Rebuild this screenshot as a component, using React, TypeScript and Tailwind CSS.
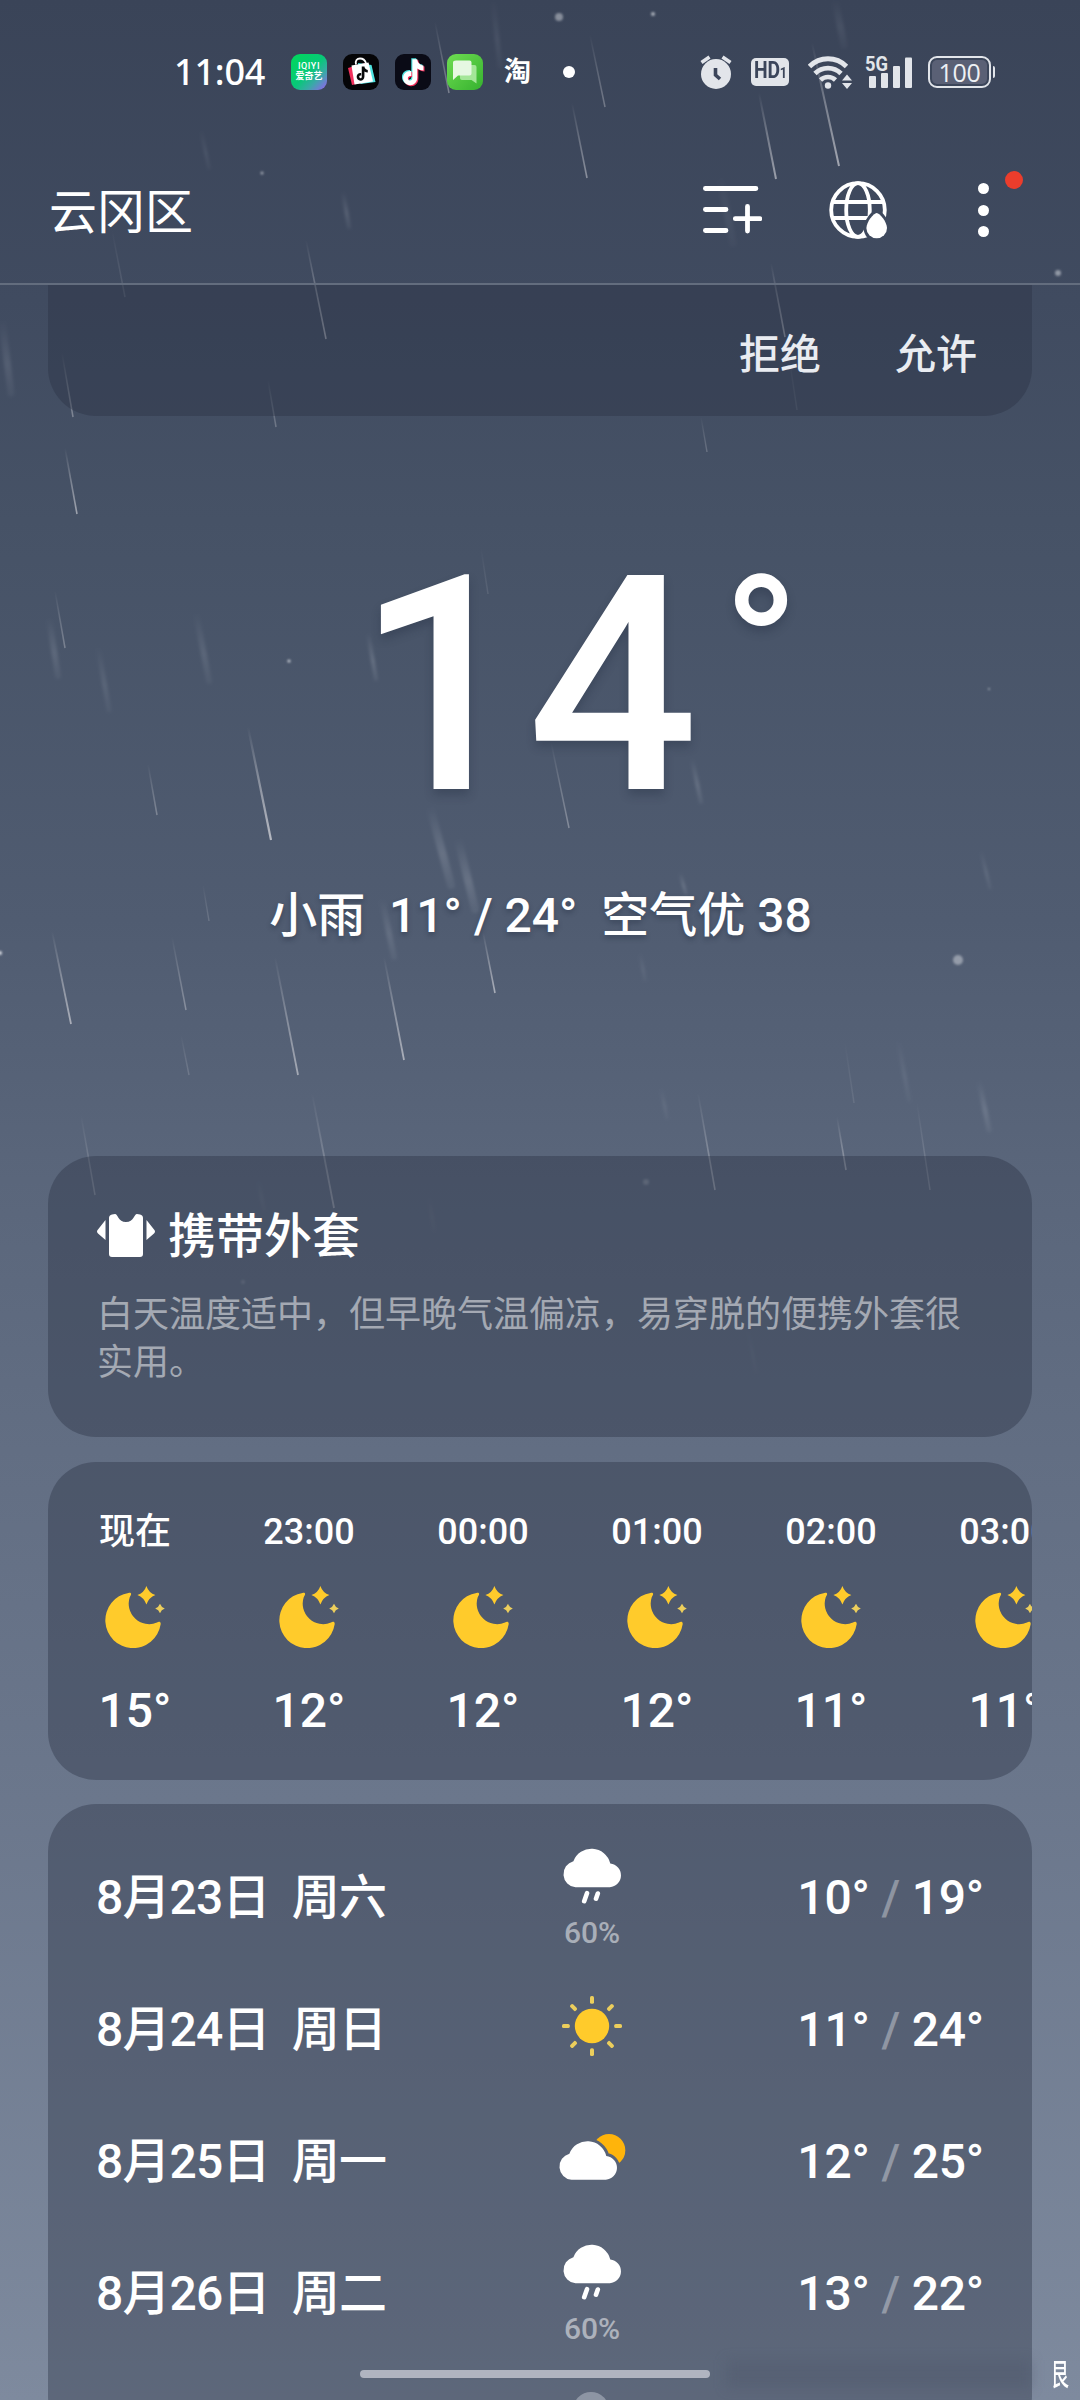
import React from "react";

type Streak = [number, number, number, number, number, number];

// x1, y1, x2, y2, opacity, width
const STREAKS: Streak[] = [
  [435, 22, 449, 93, 0.4, 1.5],
  [590, 35, 605, 107, 0.35, 1.5],
  [572, 103, 587, 178, 0.5, 1.6],
  [759, 93, 776, 179, 0.6, 2],
  [812, 43, 839, 166, 0.65, 2],
  [306, 240, 326, 339, 0.55, 1.6],
  [771, 263, 785, 337, 0.5, 1.6],
  [788, 350, 797, 410, 0.12, 1.5],
  [62, 353, 73, 417, 0.4, 1.5],
  [268, 380, 276, 427, 0.3, 1.5],
  [112, 230, 125, 297, 0.15, 1.5],
  [65, 448, 77, 514, 0.6, 1.6],
  [55, 591, 65, 648, 0.35, 1.5],
  [248, 727, 271, 840, 0.75, 2.2],
  [148, 764, 157, 815, 0.35, 1.5],
  [481, 548, 488, 594, 0.12, 1.5],
  [551, 742, 569, 828, 0.4, 1.5],
  [52, 931, 71, 1024, 0.65, 1.8],
  [172, 937, 186, 1010, 0.4, 1.5],
  [203, 885, 209, 921, 0.2, 1.4],
  [275, 957, 298, 1075, 0.6, 1.8],
  [384, 957, 404, 1060, 0.65, 1.8],
  [483, 932, 495, 993, 0.65, 1.6],
  [181, 1035, 189, 1075, 0.2, 1.4],
  [312, 1093, 334, 1208, 0.4, 1.8],
  [81, 1115, 95, 1195, 0.3, 1.5],
  [698, 1093, 715, 1190, 0.45, 1.6],
  [837, 1117, 846, 1170, 0.45, 1.6],
  [917, 1103, 930, 1190, 0.25, 1.5],
  [845, 1043, 854, 1103, 0.12, 1.5],
  [701, 417, 707, 452, 0.25, 1.4],
];

const SOFT: Streak[] = [
  [201, 130, 209, 168, 0.1, 3],
  [343, 192, 349, 227, 0.16, 4],
  [720, 177, 733, 243, 0.06, 7],
  [2, 320, 11, 393, 0.12, 7],
  [493, 0, 500, 66, 0.08, 5],
  [835, 0, 844, 45, 0.08, 7],
  [49, 618, 58, 676, 0.14, 6],
  [98, 647, 109, 710, 0.11, 5],
  [196, 613, 209, 681, 0.12, 6],
  [368, 633, 376, 679, 0.2, 4],
  [692, 759, 701, 802, 0.18, 4],
  [430, 807, 451, 885, 0.18, 8],
  [458, 839, 475, 909, 0.18, 8],
  [382, 899, 394, 957, 0.14, 6],
  [979, 1081, 989, 1130, 0.16, 5],
  [898, 1040, 909, 1100, 0.09, 4],
  [981, 851, 990, 888, 0.14, 3],
  [680, 873, 686, 894, 0.2, 3],
  [640, 953, 645, 980, 0.1, 3],
  [661, 1088, 667, 1118, 0.1, 3],
  [258, 1180, 264, 1210, 0.08, 3],
  [429, 1197, 434, 1230, 0.06, 3],
  [748, 1330, 756, 1372, 0.08, 2],
];

// x, y, radius, opacity
const DROPS: [number, number, number, number][] = [
  [559, 17, 4, 0.45],
  [653, 14, 2, 0.65],
  [262, 173, 1.5, 0.6],
  [1058, 273, 3, 0.5],
  [289, 661, 1.6, 0.8],
  [989, 689, 1, 0.6],
  [958, 960, 5, 0.45],
  [0, 953, 2, 0.9],
  [646, 1182, 3, 0.25],
  [243, 1282, 2, 0.2],
];

function Rain() {
  return (
    <svg className="pointer-events-none absolute left-0 top-0" width="1080" height="1440" viewBox="0 0 1080 1440">
      <defs>
        <filter id="soft" filterUnits="userSpaceOnUse" x="-20" y="-20" width="1120" height="1480">
          <feGaussianBlur stdDeviation="1.8" />
        </filter>
        <filter id="dot" filterUnits="userSpaceOnUse" x="-20" y="-20" width="1120" height="1480">
          <feGaussianBlur stdDeviation="0.8" />
        </filter>
        {STREAKS.map(([x1, y1, x2, y2, o], i) => (
          <linearGradient key={i} id={`s${i}`} gradientUnits="userSpaceOnUse" x1={x1} y1={y1} x2={x2} y2={y2}>
            <stop offset="0" stopColor="#d9d9de" stopOpacity="0" />
            <stop offset="0.5" stopColor="#d9d9de" stopOpacity={o * 0.6} />
            <stop offset="1" stopColor="#d9d9de" stopOpacity={o} />
          </linearGradient>
        ))}
        {SOFT.map(([x1, y1, x2, y2, o], i) => (
          <linearGradient key={i} id={`f${i}`} gradientUnits="userSpaceOnUse" x1={x1} y1={y1} x2={x2} y2={y2}>
            <stop offset="0" stopColor="#d5dae4" stopOpacity="0" />
            <stop offset="0.6" stopColor="#d5dae4" stopOpacity={o} />
            <stop offset="1" stopColor="#d5dae4" stopOpacity={o * 0.4} />
          </linearGradient>
        ))}
      </defs>
      <g filter="url(#soft)">
        {SOFT.map(([x1, y1, x2, y2, , w], i) => (
          <line key={i} x1={x1} y1={y1} x2={x2} y2={y2} stroke={`url(#f${i})`} strokeWidth={w} strokeLinecap="round" />
        ))}
      </g>
      {STREAKS.map(([x1, y1, x2, y2, , w], i) => (
        <line key={i} x1={x1} y1={y1} x2={x2} y2={y2} stroke={`url(#s${i})`} strokeWidth={w} />
      ))}
      <g filter="url(#dot)">
        {DROPS.map(([x, y, r, o], i) => (
          <circle key={i} cx={x} cy={y} r={r} fill="#e4e7ec" fillOpacity={o} />
        ))}
      </g>
    </svg>
  );
}

const NOTE = "M8.2 0h4.6c.3 3.3 2.6 5.6 5.8 5.9v4.6c-2.1 0-4.1-.6-5.8-1.8v8.4c0 4.300-3 7.300-6.800 7.300S-.6 21.400-.6 17.700c0-4.200 3.500-7.200 7.800-6.600v4.700c-1.800-.5-3.300.5-3.300 2 0 1.400 1 2.300 2.300 2.300 1.400 0 2-1 2-2.600z";

function AppIcons() {
  return (
    <div className="flex items-center gap-4">
      <div className="flex h-9 w-9 flex-col items-center justify-center rounded-[9px] bg-[linear-gradient(135deg,#00d95a_0%,#08c878_50%,#3aa9a8_72%,#9a5cf5_100%)] text-white">
        <span className="whitespace-nowrap text-[9px] font-medium leading-[9px] tracking-[0.6px]">IQIYI</span>
        <span className="whitespace-nowrap text-[9px] font-bold leading-[11px]">爱奇艺</span>
      </div>
      <svg width="36" height="36" viewBox="0 0 36 36">
        <rect width="36" height="36" rx="9" fill="#050507" />
        <path d="M5 14l17-5 5 18-18 4z" fill="#f2305c" />
        <path d="M15 9l13.500 2 4 17-15 2z" fill="#4fe3e0" />
        <path d="M8.500 11.500l17-3 4.500 19-18.500 3z" fill="#fff" />
        <path d="M13 10.500c-1-4 1-6 4-6s5 1.500 6 4.500" fill="none" stroke="#fff" strokeWidth="1.800" />
        <path d={NOTE} transform="translate(14 12.500) scale(.58)" fill="#08080a" />
      </svg>
      <svg width="36" height="36" viewBox="0 0 36 36">
        <rect width="36" height="36" rx="9" fill="#0a0b16" />
        <path d={NOTE} transform="translate(7.600 4.300) scale(1.060)" fill="#4fe3e0" />
        <path d={NOTE} transform="translate(9.800 6.300) scale(1.060)" fill="#f2305c" />
        <path d={NOTE} transform="translate(8.700 5.300) scale(1.060)" fill="#fff" />
      </svg>
      <svg width="36" height="36" viewBox="0 0 36 36">
        <defs>
          <linearGradient id="msg" x1="0" y1="0" x2="1" y2="1">
            <stop offset="0" stopColor="#6fdc52" />
            <stop offset="1" stopColor="#36b22f" />
          </linearGradient>
        </defs>
        <rect width="36" height="36" rx="9" fill="url(#msg)" />
        <path d="M15 11h12.500q2 0 2 2v16.500l-5-3.500H15q-2 0-2-2V13q0-2 2-2z" fill="#a4e698" />
        <path d="M9 6.500h13.500q2 0 2 2v11q0 2-2 2H11l-5 4.500V8.500q0-2 3-2z" fill="#e6f8e2" />
      </svg>
    </div>
  );
}

function StatusIcons() {
  return (
    <div className="flex items-center text-[#e2e5ea]">
      <svg width="32" height="34" viewBox="0 0 32 34">
        <circle cx="16" cy="19" r="15" fill="currentColor" />
        <path d="M1.500 7.500l8-5.500M30.500 7.500l-8-5.500" stroke="currentColor" strokeWidth="3.600" />
        <path d="M15.500 13v7l4.500 4" stroke="#3b455a" strokeWidth="3.600" fill="none" />
      </svg>
      <div className="ml-[19px] flex h-7 w-[38px] items-center justify-center rounded-[5px] bg-[#e2e5ea] text-[#3b455a]">
        <span className="origin-center scale-x-[0.84] whitespace-nowrap font-['Roboto'] text-[23px] font-bold leading-7 tracking-[-0.3px]">
          HD<span className="text-[15px]">1</span>
        </span>
      </div>
      <svg className="ml-[19px]" width="44" height="34" viewBox="0 0 44 34" fill="none" stroke="currentColor">
        <path d="M1.500 11.500a26 26 0 0 1 37 0" strokeWidth="4.800" />
        <path d="M7 18.500a18.500 18.500 0 0 1 26 0" strokeWidth="4.800" />
        <path d="M12.500 25a11 11 0 0 1 15 0" strokeWidth="4.600" />
        <circle cx="20" cy="30.500" r="3.200" fill="currentColor" stroke="none" />
        <path d="M34 25.500l5-6 5 6zM34 28l5 6 5-6z" fill="currentColor" stroke="none" />
      </svg>
      <svg className="ml-[13px] overflow-visible" width="47" height="34" viewBox="0 0 47 34" fill="currentColor">
        <text x="0" y="16" fontSize="20" fontWeight="700" fontFamily="Roboto" textLength="23" lengthAdjust="spacingAndGlyphs">
          5G
        </text>
        <rect x="4" y="21" width="7" height="12" rx="1" />
        <rect x="16" y="18" width="7" height="15" rx="1" />
        <rect x="28" y="11" width="7" height="22" rx="1" />
        <rect x="40" y="2.500" width="7" height="30.500" rx="1" />
      </svg>
      <div className="ml-4 flex items-center gap-[2px]">
        <div className="flex h-8 w-[63px] items-center justify-center rounded-[9px] border-2 border-[#e2e5ea] p-[2px]">
          <div className="flex h-full w-full items-center justify-center rounded-[5px] bg-[#5a6075] font-['Open_Sans'] text-[25px] leading-6 tracking-[-0.3px] text-[#eef0f4]">
            100
          </div>
        </div>
        <div className="h-3 w-[2px] rounded-r bg-[#e2e5ea]" />
      </div>
    </div>
  );
}

function Header() {
  return (
    <header className="flex h-[285px] flex-col border-b-2 border-[#636d7e]">
      <div className="flex h-36 items-center justify-between pl-[174px] pr-[85px]">
        <div className="flex items-center">
          <span className="w-[117px] font-['Noto_Sans'] text-[36px] font-medium leading-9 tracking-[-0.2px] text-white">11:04</span>
          <AppIcons />
          <span className="ml-[21px] text-[27px] font-bold leading-7 text-white">淘</span>
          <span className="ml-8 h-3 w-3 rounded-full bg-white" />
        </div>
        <StatusIcons />
      </div>
      <div className="flex h-[132px] items-center justify-between pl-[49px] pr-[52px]">
        <h1 className="pt-[5px] text-[48px] font-normal leading-[60px] text-white">云冈区</h1>
        <div className="flex items-center">
          <svg width="60" height="60" viewBox="702 180 60 60" stroke="#fff" strokeWidth="4.800" strokeLinecap="round">
            <path d="M705.400 188.500h50.500M705.400 209.500h20.600M705.400 230.500h20.600M735.300 218.700h24.500M747.500 206.500v24.500" />
          </svg>
          <svg className="ml-[66px]" width="60" height="60" viewBox="828 180 60 60" fill="none" stroke="#fff" strokeWidth="3.800">
            <defs>
              <mask id="globe">
                <rect x="820" y="170" width="80" height="80" fill="#fff" stroke="none" />
                <path d="M876.700 213c3 0 10 9 10 15.500a10 10 0 0 1-20 0c0-6.500 7-15.500 10-15.500z" fill="#000" stroke="#000" strokeWidth="6" />
              </mask>
            </defs>
            <g mask="url(#globe)">
              <circle cx="858" cy="210" r="26.800" />
              <ellipse cx="858" cy="210" rx="11.800" ry="26.800" />
              <path d="M832 202h52M832 218h52" />
            </g>
            <path d="M876.700 213c3 0 10.300 9 10.300 15a10.300 10.300 0 0 1-20.600 0c0-6 7.300-15 10.300-15z" fill="#fff" stroke="none" />
          </svg>
          <div className="relative ml-[90px] flex w-[50px] flex-col gap-[10.500px]">
            <span className="h-[11px] w-[11px] rounded-full bg-white" />
            <span className="h-[11px] w-[11px] rounded-full bg-white" />
            <span className="h-[11px] w-[11px] rounded-full bg-white" />
            <span className="absolute -top-[12px] left-[27px] h-[18px] w-[18px] rounded-full bg-[#eb3d2c]" />
          </div>
        </div>
      </div>
    </header>
  );
}

const CLOUD = "M13.500 41.300A13.300 13.300 0 0 1 11.400 15.200A19.400 19.400 0 0 1 48.300 17.400A12 12 0 0 1 47.800 41.300Z";

function RainCloud() {
  return (
    <svg className="-mt-[2px]" width="60" height="58" viewBox="0 0 60 58">
      <path d={CLOUD} fill="#fff" />
      <path d="M25 47.200l-2.800 8M35.800 47.500l-1.800 5.200" stroke="#fff" strokeWidth="4.600" strokeLinecap="round" />
    </svg>
  );
}

function Sun() {
  return (
    <svg className="mb-[8px]" width="60" height="60" viewBox="-30 -30 60 60">
      <circle r="17.200" fill="#ffcb2b" />
      {[0, 45, 90, 135, 180, 225, 270, 315].map((a) => (
        <rect key={a} x="-2" y="-30" width="4" height="7.800" rx="1.600" fill="#ecce5c" transform={`rotate(${a})`} />
      ))}
    </svg>
  );
}

function PartlyCloudy() {
  return (
    <svg className="mb-[10px]" width="68" height="46" viewBox="0 -4.500 68 46">
      <defs>
        <mask id="behind">
          <rect x="0" y="-10" width="80" height="60" fill="#fff" />
          <path d={CLOUD} fill="#000" stroke="#000" strokeWidth="6" />
        </mask>
      </defs>
      <circle cx="51" cy="11.800" r="16.300" fill="#ffb40b" mask="url(#behind)" />
      <path d={CLOUD} fill="#fff" />
    </svg>
  );
}

function Moon() {
  return (
    <svg width="60" height="62" viewBox="0 0 60 62" fill="#ffcb2b">
      <path d="M23.500 6.900A27.800 27.800 0 1 0 55.600 38.500C56.200 35.800 54 35.200 52 36.600A20.500 20.500 0 0 1 24.800 11C27 7.800 26.400 6.400 23.500 6.900Z" />
      <path d="M41.400 0Q43.800 7 50.400 9Q43.800 11.500 41.400 18.600Q39 11.500 32.400 9Q39 7 41.400 0Z" />
      <path d="M55 17.800Q56.200 21.200 59.800 22.500Q56.200 23.800 55 27.200Q53.800 23.800 50.200 22.500Q53.800 21.200 55 17.800Z" fill="#ecce5c" />
    </svg>
  );
}

const HOURS = [
  ["现在", "15°"],
  ["23:00", "12°"],
  ["00:00", "12°"],
  ["01:00", "12°"],
  ["02:00", "11°"],
  ["03:00", "11°"],
];

const DAYS = [
  { date: "8月23日", day: "周六", icon: "rain", chance: "60%", low: "10°", high: "19°" },
  { date: "8月24日", day: "周日", icon: "sun", chance: "", low: "11°", high: "24°" },
  { date: "8月25日", day: "周一", icon: "partly", chance: "", low: "12°", high: "25°" },
  { date: "8月26日", day: "周二", icon: "rain", chance: "60%", low: "13°", high: "22°" },
];

function DayIcon({ icon }: { icon: string }) {
  if (icon === "rain") return <RainCloud />;
  if (icon === "sun") return <Sun />;
  return <PartlyCloudy />;
}

export default function App() {
  return (
    <div className="relative h-[2400px] w-[1080px] overflow-hidden bg-[linear-gradient(180deg,#3a4458_0px,#404b60_300px,#465266_520px,#505c71_920px,#5a667b_1180px,#626e83_1450px,#6b778c_1800px,#7e8a9e_2400px)] font-['Roboto','Noto_Sans_CJK_SC',sans-serif] text-white">
      <Rain />
      <div className="relative">
        <Header />
        <main className="px-12">
          <section className="flex h-[131px] justify-end gap-[74px] rounded-b-[48px] bg-[rgba(40,48,67,0.39)] pr-[55px] pt-[45px] text-[41px] font-medium leading-[50px] text-[#e9ecf1]">
            <span>拒绝</span>
            <span>允许</span>
          </section>

          <section className="flex flex-col items-center pt-[120px]">
            <div className="flex h-[300px] items-start self-start pl-[308px] font-medium [text-shadow:0_6px_10px_rgba(30,40,60,0.3)]">
              <span className="text-[301px] leading-[300px]">14</span>
              <span className="ml-[24px] mt-[13px] text-[203px] leading-[203px]">°</span>
            </div>
            <p className="mt-[50px] h-[58px] whitespace-pre pl-px text-[48px] font-medium leading-[60px] [text-shadow:0_3px_5px_rgba(30,40,60,0.4)]">
              {"小雨  11° / 24°  空气优 38"}
            </p>
          </section>

          <section className="mt-[212px] h-[281px] rounded-[48px] bg-[rgba(40,48,67,0.39)] px-[49px] pt-[49px]">
            <div className="flex items-center gap-[13px]">
              <svg width="58" height="43" viewBox="0 0 58 43" fill="#fff">
                <path d="M12 4q0-3 3-3.500l3-.5c3 0 3 8 11 8s8-8 11-8l3 .5q3 .5 3 3.500v36q0 3-3 3H15q-3 0-3-3z" />
                <path d="M8.500 6v20L1 19.500q-2-2 0-4zM49.500 6v20l7.500-6.500q2-2 0-4z" />
              </svg>
              <h2 className="relative top-[2px] text-[48px] font-medium leading-[60px]">携带外套</h2>
            </div>
            <p className="mt-[26px] text-[36px] leading-[48px] text-white/50">白天温度适中，但早晚气温偏凉，易穿脱的便携外套很实用。</p>
          </section>

          <section className="mt-[25px] h-[318px] overflow-hidden rounded-[48px] bg-[rgba(40,48,67,0.39)] pt-[48px]">
            <div className="flex w-max">
              {HOURS.map(([time, temp]) => (
                <div key={time} className="flex w-[174px] flex-col items-center">
                  <span className="text-[36px] font-medium leading-[44px]">{time}</span>
                  <div className="mt-[32px]">
                    <Moon />
                  </div>
                  <span className="mt-[35px] text-[48px] font-medium leading-[56px]">{temp}</span>
                </div>
              ))}
            </div>
          </section>

          <section className="mt-6 h-[640px] rounded-[48px] bg-[rgba(40,48,67,0.39)] pl-[48px] pr-[48px] pt-[28px]">
            {DAYS.map((d) => (
              <div key={d.date} className="flex h-[132px] items-center">
                <span className="w-[449px] whitespace-pre text-[48px] font-medium leading-[60px] tracking-[-0.85px]">{`${d.date}  ${d.day}`}</span>
                <div className="flex w-[94px] flex-col items-center">
                  <DayIcon icon={d.icon} />
                  {d.chance && <span className="mt-[13px] text-[30px] font-medium leading-[32px] text-white/50">{d.chance}</span>}
                </div>
                <span className="flex-1 text-right text-[48px] font-medium leading-[60px] tracking-[-0.2px]">
                  {d.low} <span className="text-white/35">/</span> {d.high}
                </span>
              </div>
            ))}
            <div className="ml-[477px] mt-[32px] h-9 w-9 rounded-full bg-[#8d95a4]" />
          </section>
        </main>
      </div>

      <div className="absolute left-[360px] top-[2370px] h-2 w-[350px] rounded-full bg-[#b0b4c0]" />
      <div className="absolute left-[726px] top-[2360px] h-[28px] w-[306px] bg-[#4c576a]/35 blur-[6px]" />
      <div className="absolute left-[1051px] top-[2358px] w-[22px]">
        <span className="block origin-left scale-x-[0.6] text-[30px] font-medium leading-[34px]">艮</span>
      </div>
    </div>
  );
}
